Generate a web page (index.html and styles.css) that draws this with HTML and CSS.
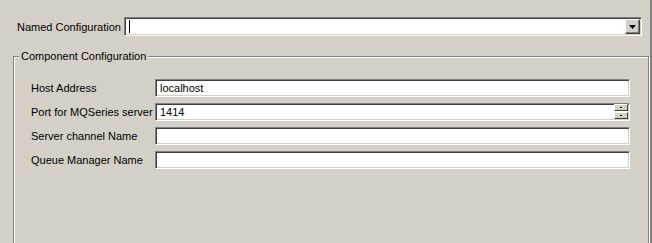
FILE: index.html
```html
<!DOCTYPE html>
<html lang="en">
<head>
    <meta charset="UTF-8">
    <title>Component Configuration</title>
    <link rel="stylesheet" href="styles.css">
</head>
<body>
    <div class="panel">
        <!-- Linha da configuracao nomeada -->
        <div class="named-row">
            <label class="named-label">Named Configuration</label>
            <div class="combo">
                <div class="combo-text"><span class="caret"></span></div>
                <div class="drop-btn">
                    <svg width="7" height="4" viewBox="0 0 7 4"><path d="M0 0h7L3.5 4z" fill="#000"/></svg>
                </div>
            </div>
        </div>

        <!-- Grupo de configuracao do componente -->
        <fieldset class="group">
            <legend>Component Configuration</legend>
            <div class="form-grid">
                <label>Host Address</label>
                <div class="field"><span class="field-text">localhost</span></div>

                <label>Port for MQSeries server</label>
                <div class="field">
                    <span class="field-text">1414</span>
                    <div class="spinner">
                        <div class="spin-btn"><span class="dot"></span></div>
                        <div class="spin-btn"><span class="dot"></span></div>
                    </div>
                </div>

                <label>Server channel Name</label>
                <div class="field"><span class="field-text"></span></div>

                <label>Queue Manager Name</label>
                <div class="field"><span class="field-text"></span></div>
            </div>
        </fieldset>
    </div>
</body>
</html>
```

FILE: styles.css
```css
* {
    box-sizing: border-box;
}

body {
    margin: 0;
    background-color: #d4d0c8;
    color: #000;
    font-family: "Liberation Sans", Arial, sans-serif;
    font-size: 11px;
}

.panel {
    width: 652px;
    height: 243px;
    overflow: hidden;
    border-right: 2px solid #808080;
}

.named-row {
    display: flex;
    align-items: center;
    padding: 17px 0 0 17px;
}

.named-label {
    width: 107px;
}

.combo {
    display: flex;
    width: 518px;
    height: 19px;
    background-color: #fff;
    border: 1px solid;
    border-color: #808080 #fff #fff #808080;
    box-shadow: inset 1px 1px #404040, inset -1px -1px #d4d0c8;
    padding: 1px;
}

.combo-text {
    flex: 1;
    display: flex;
    align-items: center;
    padding-left: 3px;
}

.caret {
    display: block;
    width: 1px;
    height: 13px;
    background-color: #000;
}

.drop-btn {
    width: 15px;
    height: 15px;
    display: flex;
    align-items: center;
    justify-content: center;
    background-color: #d4d0c8;
    border: 1px solid;
    border-color: #fff #404040 #404040 #fff;
    box-shadow: inset -1px -1px #808080;
}

.group {
    margin: 14px 0 0 13px;
    width: 636px;
    height: 260px;
    padding: 17px 17px 0 17px;
    border: 1px solid #808080;
    box-shadow: inset 1px 1px #fff, 1px 1px #fff;
}

.group legend {
    padding: 0 2px;
    margin-left: -12px;
    background-color: #d4d0c8;
}

.form-grid {
    display: grid;
    grid-template-columns: 124px 475px;
    grid-auto-rows: 18px;
    row-gap: 6px;
    align-items: center;
}

.field {
    display: flex;
    align-items: center;
    height: 18px;
    background-color: #fff;
    border: 1px solid;
    border-color: #808080 #fff #fff #808080;
    box-shadow: inset 1px 1px #404040, inset -1px -1px #d4d0c8;
    padding: 0 1px 0 4px;
}

.field-text {
    flex: 1;
}

.spinner {
    display: flex;
    flex-direction: column;
    gap: 1px;
    margin-top: -1px;
}

.spin-btn {
    width: 14px;
    height: 7px;
    display: flex;
    align-items: center;
    justify-content: center;
    background-color: #d4d0c8;
    border: 1px solid;
    border-color: #fff #404040 #404040 #fff;
}

.dot {
    width: 2px;
    height: 1px;
    background-color: #000;
}
```
